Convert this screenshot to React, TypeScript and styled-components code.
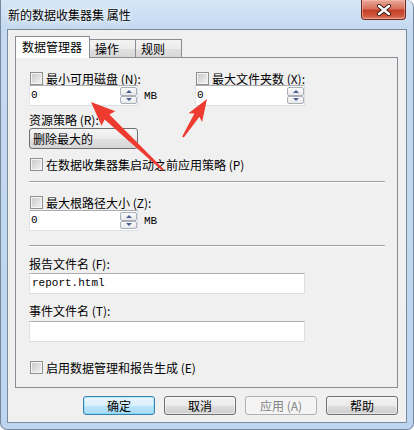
import React from "react";
import styled, { createGlobalStyle } from "styled-components";

const UI_FONT = `"Noto Sans CJK SC", "Noto Sans", "Liberation Sans", sans-serif`;
const MONO_FONT = `"Liberation Mono", "DejaVu Sans Mono", monospace`;

const GlobalStyle = createGlobalStyle`
  html, body { margin: 0; padding: 0; background: #ffffff; }
  body { width: 414px; height: 430px; overflow: hidden; font-family: ${UI_FONT}; }
  * { box-sizing: border-box; }
`;

const Window = styled.div`
  position: relative;
  width: 414px;
  height: 430px;
  display: flex;
  flex-direction: column;
  padding: 0 6px 6px 6px;
  background: linear-gradient(180deg, #d6e6f7 0px, #c4daf1 28px, #bdd5ef 100%);
  border: 1px solid #74879c;
  border-top: none;
  border-radius: 0 7px 7px 7px;
  font-family: ${UI_FONT};
  font-size: 12px;
  color: #000;
`;

const TitleBar = styled.div`
  height: 29px;
  flex: none;
  display: flex;
  align-items: flex-start;
  justify-content: space-between;
`;

const Title = styled.div`
  margin: 8px 0 0 1px;
  font-size: 12px;
  line-height: 14px;
  color: #000;
  text-shadow: 0 0 6px rgba(255, 255, 255, 0.95), 0 0 3px rgba(255, 255, 255, 0.9);
`;

const CloseButton = styled.div`
  width: 45px;
  height: 20px;
  margin-right: 1px;
  display: flex;
  align-items: center;
  justify-content: center;
  border: 1px solid #6e2a20;
  border-top: none;
  border-radius: 0 0 4px 4px;
  background: linear-gradient(180deg, #e9a898 0%, #d9715e 45%, #c43f27 55%, #cf5a3f 85%, #e08a6e 100%);
  box-shadow: inset 0 0 0 1px rgba(255, 200, 190, 0.45);
`;

const Client = styled.div`
  flex: 1;
  display: flex;
  flex-direction: column;
  border: 1px solid #7d8a99;
  background: #f0f0f0;
  padding: 6px 8px 0 7px;
`;

const TabStrip = styled.div`
  height: 22px;
  flex: none;
  display: flex;
  align-items: flex-end;
  margin-bottom: -1px;
  position: relative;
  z-index: 1;
`;

const Tab = styled.div<{ $active?: boolean; $w: number }>`
  width: ${(p) => p.$w}px;
  height: ${(p) => (p.$active ? 22 : 19)}px;
  margin-left: ${(p) => (p.$active ? 0 : -1)}px;
  padding-left: ${(p) => (p.$active ? 6 : 5)}px;
  border: 1px solid #898c95;
  border-bottom: ${(p) => (p.$active ? "none" : "1px solid #898c95")};
  background: ${(p) =>
    p.$active
      ? "#ffffff"
      : "linear-gradient(180deg, #f3f3f3 0%, #ececec 50%, #e0e0e0 51%, #d8d8d8 100%)"};
  font-size: 12px;
  line-height: ${(p) => (p.$active ? 20 : 17)}px;
  white-space: nowrap;
  position: relative;
  z-index: ${(p) => (p.$active ? 2 : 1)};
  &:first-child { margin-left: 0; }
`;

const Panel = styled.div`
  height: 331px;
  flex: none;
  display: flex;
  flex-direction: column;
  border: 1px solid #898c95;
  background: #f0f0f0;
  padding: 0 12px 0 13px;
`;

const Columns = styled.div<{ $mt: number }>`
  display: grid;
  grid-template-columns: 166px 1fr;
  margin-top: ${(p) => p.$mt}px;
`;

const Field = styled.div`
  display: flex;
  flex-direction: column;
`;

const CheckRow = styled.div<{ $mt: number }>`
  display: flex;
  align-items: center;
  gap: 3px;
  height: 13px;
  margin-top: ${(p) => p.$mt}px;
`;

const CheckBox = styled.div`
  width: 13px;
  height: 13px;
  flex: none;
  margin-left: 1px;
  border: 1px solid #8e8f8f;
  background: linear-gradient(135deg, #c6c6c6 0%, #dedede 50%, #f4f4f4 100%);
  box-shadow: inset 0 0 0 1px #f5f5f5;
`;

const LabelText = styled.span`
  font-size: 12px;
  line-height: 13px;
  white-space: nowrap;
`;

const PlainLabel = styled.div<{ $mt: number }>`
  height: 13px;
  margin-top: ${(p) => p.$mt}px;
  font-size: 12px;
  line-height: 13px;
  white-space: nowrap;
`;

const SpinRow = styled.div<{ $mt: number }>`
  display: flex;
  align-items: center;
  margin-top: ${(p) => p.$mt}px;
`;

const SpinBox = styled.div<{ $w: number }>`
  width: ${(p) => p.$w}px;
  height: 21px;
  display: flex;
  border: 1px solid #dbdfe6;
  border-top-color: #abadb3;
  border-left-color: #e2e3ea;
  background: #fff;
`;

const SpinValue = styled.div`
  flex: 1;
  padding-left: 1px;
  font-family: ${MONO_FONT};
  font-size: 11px;
  line-height: 19px;
`;

const SpinButtons = styled.div`
  width: 17px;
  display: flex;
  flex-direction: column;
  padding: 1px 0;
  gap: 0;
`;

const SpinButton = styled.div`
  flex: 1;
  display: flex;
  align-items: center;
  justify-content: center;
  border: 1px solid #a9b0b9;
  border-radius: 2px;
  background: linear-gradient(180deg, #fafafa 0%, #e9e9e9 100%);
`;

const SpinArrow = styled.div<{ $dir: "up" | "down" }>`
  width: 0;
  height: 0;
  border-left: 3px solid transparent;
  border-right: 3px solid transparent;
  ${(p) =>
    p.$dir === "up"
      ? "border-bottom: 3px solid #4a5f95;"
      : "border-top: 3px solid #4a5f95;"}
`;

const Unit = styled.span`
  margin-left: 6px;
  font-family: ${MONO_FONT};
  font-size: 11px;
`;

const Dropdown = styled.div<{ $mt: number }>`
  width: 109px;
  height: 21px;
  margin-top: ${(p) => p.$mt}px;
  display: flex;
  align-items: center;
  justify-content: space-between;
  padding: 0 5px 0 3px;
  border: 1px solid #707070;
  border-radius: 3px;
  background: linear-gradient(180deg, #f4f4f4 0%, #ececec 50%, #e0e0e0 51%, #d6d6d6 100%);
  font-size: 12px;
`;

const DropArrow = styled.div`
  width: 0;
  height: 0;
  border-left: 3.5px solid transparent;
  border-right: 3.5px solid transparent;
  border-top: 4px solid #000;
`;

const Separator = styled.div<{ $mt: number }>`
  height: 2px;
  margin-top: ${(p) => p.$mt}px;
  border-top: 1px solid #a0a0a0;
  border-bottom: 1px solid #ffffff;
`;

const TextBox = styled.div<{ $mt: number }>`
  width: 276px;
  height: 21px;
  margin-top: ${(p) => p.$mt}px;
  padding-left: 2px;
  border: 1px solid #dbdfe6;
  border-top-color: #abadb3;
  border-left-color: #e2e3ea;
  background: #fff;
  font-family: ${MONO_FONT};
  font-size: 11px;
  line-height: 19px;
`;

const ButtonRow = styled.div`
  display: flex;
  justify-content: flex-end;
  gap: 9px;
  margin-top: 8px;
`;

const DialogButton = styled.div<{ $kind?: "default" | "disabled" }>`
  width: 72px;
  height: 19px;
  display: flex;
  align-items: center;
  justify-content: center;
  border-radius: 3px;
  font-size: 12px;
  border: 1px solid
    ${(p) => (p.$kind === "default" ? "#3c7fb1" : p.$kind === "disabled" ? "#adb2b5" : "#707070")};
  color: ${(p) => (p.$kind === "disabled" ? "#838383" : "#000")};
  background: ${(p) =>
    p.$kind === "default"
      ? "linear-gradient(180deg, #eaf6fd 0%, #d9f0fc 50%, #bee6fd 51%, #a7d9f5 100%)"
      : p.$kind === "disabled"
      ? "#f4f4f4"
      : "linear-gradient(180deg, #f2f2f2 0%, #ebebeb 50%, #dddddd 51%, #cfcfcf 100%)"};
  box-shadow: ${(p) =>
    p.$kind === "default" ? "inset 0 0 0 1px #48d7fb55" : p.$kind === "disabled" ? "none" : "inset 0 0 0 1px #fcfcfc88"};
`;

const Annotations = styled.svg`
  position: absolute;
  top: 0;
  left: 0;
  width: 414px;
  height: 430px;
  pointer-events: none;
`;

function Spin({ w, value }: { w: number; value: string }) {
  return (
    <SpinBox $w={w}>
      <SpinValue>{value}</SpinValue>
      <SpinButtons>
        <SpinButton>
          <SpinArrow $dir="up" />
        </SpinButton>
        <SpinButton>
          <SpinArrow $dir="down" />
        </SpinButton>
      </SpinButtons>
    </SpinBox>
  );
}

function Check({ label, mt }: { label: string; mt: number }) {
  return (
    <CheckRow $mt={mt}>
      <CheckBox />
      <LabelText>{label}</LabelText>
    </CheckRow>
  );
}

export default function App() {
  return (
    <>
      <GlobalStyle />
      <Window>
        <TitleBar>
          <Title>新的数据收集器集 属性</Title>
          <CloseButton>
            <svg width="16" height="12" viewBox="0 0 16 12">
              <path d="M3 2 L13 10 M13 2 L3 10" stroke="#3b1a16" strokeWidth="4.2" strokeLinecap="round" />
              <path d="M3 2 L13 10 M13 2 L3 10" stroke="#ffffff" strokeWidth="2.4" strokeLinecap="round" />
            </svg>
          </CloseButton>
        </TitleBar>
        <Client>
          <TabStrip>
            <Tab $active $w={75}>数据管理器</Tab>
            <Tab $w={47}>操作</Tab>
            <Tab $w={47}>规则</Tab>
          </TabStrip>
          <Panel>
            <Columns $mt={14}>
              <Field>
                <Check label="最小可用磁盘 (N):" mt={0} />
                <SpinRow $mt={0}>
                  <Spin w={109} value="0" />
                  <Unit>MB</Unit>
                </SpinRow>
              </Field>
              <Field>
                <Check label="最大文件夹数 (X):" mt={0} />
                <SpinRow $mt={0}>
                  <Spin w={110} value="0" />
                </SpinRow>
              </Field>
            </Columns>
            <PlainLabel $mt={7}>资源策略 (R):</PlainLabel>
            <Dropdown $mt={2}>
              <span>删除最大的</span>
              <DropArrow />
            </Dropdown>
            <Check label="在数据收集器集启动之前应用策略 (P)" mt={9} />
            <Separator $mt={10} />
            <Check label="最大根路径大小 (Z):" mt={13} />
            <SpinRow $mt={1}>
              <Spin w={109} value="0" />
              <Unit>MB</Unit>
            </SpinRow>
            <Separator $mt={14} />
            <PlainLabel $mt={10}>报告文件名 (F):</PlainLabel>
            <TextBox $mt={3}>report.html</TextBox>
            <PlainLabel $mt={10}>事件文件名 (T):</PlainLabel>
            <TextBox $mt={4} />
            <Check label="启用数据管理和报告生成 (E)" mt={19} />
          </Panel>
          <ButtonRow>
            <DialogButton $kind="default">确定</DialogButton>
            <DialogButton>取消</DialogButton>
            <DialogButton $kind="disabled">应用 (A)</DialogButton>
            <DialogButton>帮助</DialogButton>
          </ButtonRow>
        </Client>
        <Annotations viewBox="0 0 414 430">
          <polygon
            points="90,102 114.3,111.2 108.4,114.6 162.7,169.3 161.3,170.7 103.6,119.6 100.5,125.8"
            fill="#ee3b30"
          />
          <polygon
            points="206,99 201.1,121.9 198.4,116.7 182.8,137.5 181.2,136.5 193.4,113.5 187.5,113.3"
            fill="#ee3b30"
          />
        </Annotations>
      </Window>
    </>
  );
}
